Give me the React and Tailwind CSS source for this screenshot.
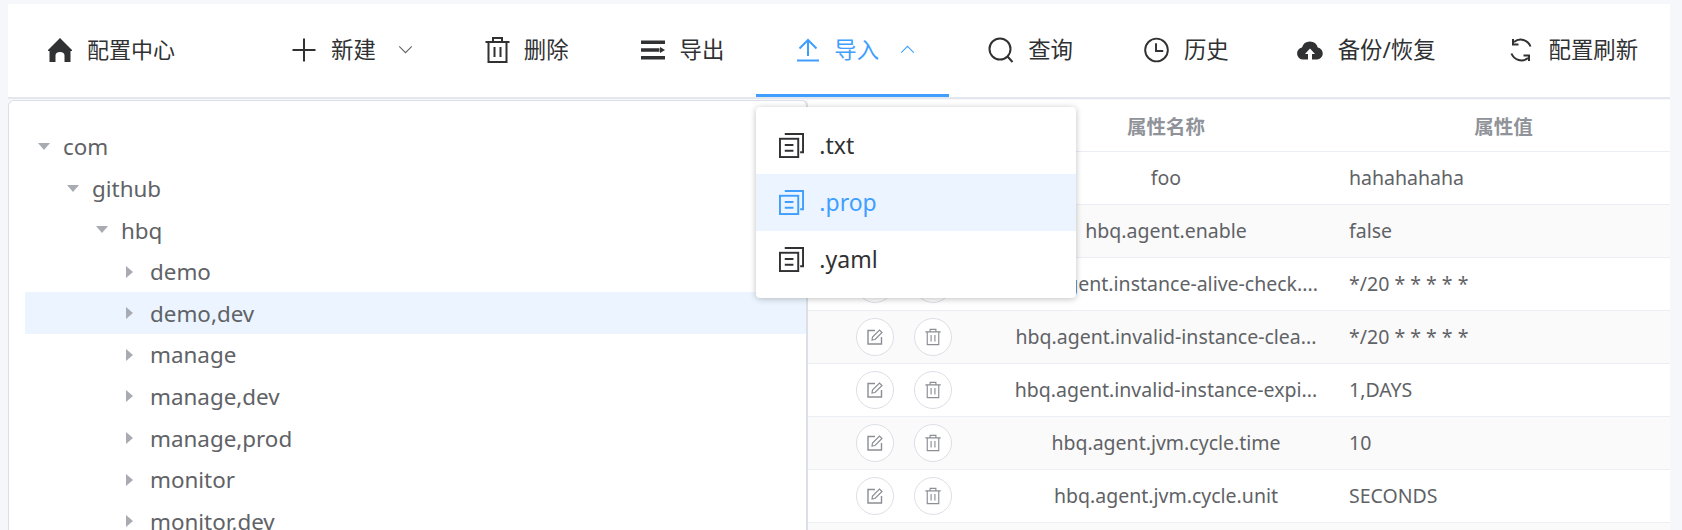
import React from 'react';

const cjk = 'font-["Noto_Sans","Noto_Sans_CJK_SC",sans-serif]';

const HomeIcon = () => (
  <svg viewBox="0 0 24 24" className="w-6 h-6" fill="currentColor">
    <path d="M12 0 L24 12 V13 H22.5 V24 H16.5 V17.5 A4.5 3.5 0 0 0 7.5 17.5 V24 H1.5 V13 H0 V12 Z" />
  </svg>
);

const PlusIcon = () => (
  <svg viewBox="0 0 24 24" className="w-6 h-6" fill="none" stroke="currentColor" strokeWidth="2">
    <path d="M12 0.5 V23.5 M0.5 12 H23.5" />
  </svg>
);

const TrashIcon = ({ className = 'w-[25px] h-[26px]', width = 2 }) => (
  <svg viewBox="0 0 25 26" className={className} fill="none" stroke="currentColor" strokeWidth={width}>
    <path d="M0.5 5 H24.5 M8 5 V1 H17 V5 M3.5 5 V25 H21.5 V5 M9.5 10 V20 M15.5 10 V20" />
  </svg>
);

const ExportIcon = () => (
  <svg viewBox="0 0 24 24" className="w-6 h-6" fill="currentColor">
    <path d="M0 2.5 H24 V6 H0 Z M0 10.2 H18.5 V13.8 H0 Z M0 18 H24 V21.5 H0 Z M19 9 L24 12 L19 15 Z" />
  </svg>
);

const UploadIcon = () => (
  <svg viewBox="0 0 24 24" className="w-6 h-6" fill="none" stroke="currentColor" strokeWidth="2">
    <path d="M12 18 V2 M3.5 10.5 L12 2 L20.5 10.5 M1 22.5 H23" />
  </svg>
);

const SearchIcon = () => (
  <svg viewBox="0 0 26 26" className="w-[26px] h-[26px]" fill="none" stroke="currentColor" strokeWidth="2">
    <circle cx="12" cy="12" r="10.5" />
    <path d="M19.5 19.5 L24.5 25" />
  </svg>
);

const ClockIcon = () => (
  <svg viewBox="0 0 26 26" className="w-[25px] h-[26px]" fill="none" stroke="currentColor" strokeWidth="2">
    <circle cx="13" cy="13" r="11.8" />
    <path d="M12.5 6 V14 H20" />
  </svg>
);

const CloudIcon = () => (
  <svg viewBox="0 0 26 20" className="w-[26px] h-[20px]" fill="currentColor">
    <path d="M6 19.5 A6 6 0 0 1 5 7.6 A8.2 8.2 0 0 1 20.8 7.6 A6 6 0 0 1 20 19.5 L15 19.5 L15 14 L18 14 L13 8.5 L8 14 L11 14 L11 19.5 Z" />
  </svg>
);

const RefreshIcon = () => (
  <svg viewBox="0 0 24 24" className="w-6 h-6" fill="none" stroke="currentColor" strokeWidth="2">
    <path d="M21.5 8.5 A10.5 10.5 0 0 0 5 4" />
    <path d="M2.5 15.5 A10.5 10.5 0 0 0 19 20" />
    <path d="M4 1 V6.5 H9.5" />
    <path d="M20 23 V17.5 H14.5" />
  </svg>
);

const ChevronDown = () => (
  <svg viewBox="0 0 16 10" className="w-[15px] h-[9px]" fill="none" stroke="currentColor" strokeWidth="1.2">
    <path d="M1 1.5 L8 8.5 L15 1.5" />
  </svg>
);

const ChevronUp = () => (
  <svg viewBox="0 0 16 10" className="w-[15px] h-[9px]" fill="none" stroke="currentColor" strokeWidth="1.2">
    <path d="M1 8.5 L8 1.5 L15 8.5" />
  </svg>
);

const DocIcon = () => (
  <svg viewBox="0 0 26 26" className="w-[25px] h-[25px]" fill="none" stroke="currentColor" strokeWidth="2">
    <rect x="1" y="6" width="19" height="19" />
    <path d="M6 1 H25 V20 H22" />
    <path d="M6 12.5 H15 M6 18.5 H15" />
  </svg>
);

const EditIcon = () => (
  <svg viewBox="0 0 16 16" className="w-4 h-4" fill="none" stroke="currentColor" strokeWidth="1.4">
    <path d="M8 1.5 H1 V15 H14.5 V8" />
    <path d="M5 11 L5.5 8 L12.5 1 L15 3.5 L8 10.5 Z" strokeWidth="1.2" />
  </svg>
);

const NavItem = ({ icon, label, after, active, pl = 'pl-[40px]', pr = 'pr-[31px]', gap = 'gap-[15px]', children }) => (
  <div
    className={`relative flex items-center h-full shrink-0 ${gap} ${pl} ${pr} ${
      active ? 'text-[#409eff] border-b-[3px] border-[#409eff] pt-[1px]' : 'text-[#303133] pb-[2px]'
    }`}
  >
    {icon}
    <span className="text-[22.4px] whitespace-nowrap">{label}</span>
    {after && <span className="ml-[7px] flex items-center text-[#606266]">{after}</span>}
    {children}
  </div>
);

const treeRows = [
  { label: 'com', open: true, depth: 0 },
  { label: 'github', open: true, depth: 1 },
  { label: 'hbq', open: true, depth: 2 },
  { label: 'demo', depth: 3 },
  { label: 'demo,dev', depth: 3, selected: true },
  { label: 'manage', depth: 3 },
  { label: 'manage,dev', depth: 3 },
  { label: 'manage,prod', depth: 3 },
  { label: 'monitor', depth: 3 },
  { label: 'monitor,dev', depth: 3 },
];

const tableRows = [
  ['foo', 'hahahahaha'],
  ['hbq.agent.enable', 'false'],
  ['hbq.agent.instance-alive-check....', '*/20 * * * * *'],
  ['hbq.agent.invalid-instance-clea...', '*/20 * * * * *'],
  ['hbq.agent.invalid-instance-expi...', '1,DAYS'],
  ['hbq.agent.jvm.cycle.time', '10'],
  ['hbq.agent.jvm.cycle.unit', 'SECONDS'],
  ['', ''],
];

const TreeRow = ({ row }) => (
  <div
    className={`flex items-center h-[41.6px] shrink-0 text-[22.4px] text-[#606266] ${row.selected ? 'bg-[#ecf5ff]' : ''}`}
    style={{ paddingLeft: row.depth * 29 + 13 }}
  >
    <span className="w-[26px] flex items-center">
      {row.open ? (
        <span className="w-0 h-0 border-l-[6px] border-r-[6px] border-t-[7px] border-l-transparent border-r-transparent border-t-[#a8abb2]" />
      ) : (
        <span className="ml-[1px] w-0 h-0 border-t-[6px] border-b-[6px] border-l-[7px] border-t-transparent border-b-transparent border-l-[#a8abb2]" />
      )}
    </span>
    <span className="-ml-[1px] pt-[1px]">{row.label}</span>
  </div>
);

const RoundBtn = ({ children }) => (
  <button className="w-[38px] h-[38px] rounded-full border border-[#dcdfe6] bg-white flex items-center justify-center text-[#8c8e94]">
    {children}
  </button>
);

const TableRow = ({ row, idx }) => (
  <div className={`flex items-center h-[53px] shrink-0 border-b border-[#ebeef5] ${idx % 2 ? 'bg-[#fafafa]' : 'bg-white'}`}>
    <div className="w-[187px] shrink-0 pl-[48px] flex gap-[20px]">
      {row[0] && (
        <>
          <RoundBtn><EditIcon /></RoundBtn>
          <RoundBtn><TrashIcon className="w-4 h-[18px]" width={1.8} /></RoundBtn>
        </>
      )}
    </div>
    <div className="w-[342px] shrink-0 px-[18px] text-center whitespace-nowrap">{row[0]}</div>
    <div className="flex-1 pl-[12px]">{row[1]}</div>
  </div>
);

export default function App() {
  return (
    <div className={`h-[530px] overflow-hidden bg-[#f5f7fa] pt-[4px] pl-[8px] pr-[12px] ${cjk}`}>
      {/* top menu */}
      <div className="flex h-[93px] bg-white">
        <div className="flex items-center h-full pb-[2px] pl-[40px] gap-[15px] w-[243px] shrink-0 text-[#303133]">
          <HomeIcon />
          <span className="text-[22px]">配置中心</span>
        </div>
        <NavItem icon={<PlusIcon />} label="新建" after={<ChevronDown />} pl="pl-[41px]" pr="pr-[33px]" />
        <NavItem icon={<TrashIcon />} label="删除" pl="pl-[39px]" pr="pr-[32px]" gap="gap-[14px]" />
        <NavItem icon={<ExportIcon />} label="导出" pr="pr-[32px]" />
        <NavItem
          active
          icon={<UploadIcon />}
          label="导入"
          after={<span className="text-[#409eff]"><ChevronUp /></span>}
          pl="pl-[40px]"
          pr="pr-[34px]"
          gap="gap-[14px]"
        >
          <div className="absolute z-10 left-0 top-[103px] w-[320px] py-[10px] bg-white rounded shadow-[0_1px_6px_rgba(0,0,0,0.25)]">
            {['.txt', '.prop', '.yaml'].map((ext) => (
              <div
                key={ext}
                className={`flex items-center h-[57px] pl-[23px] gap-[15px] text-[23px] ${
                  ext === '.prop' ? 'bg-[#ecf5ff] text-[#409eff]' : 'text-[#303133]'
                }`}
              >
                <DocIcon />
                <span>{ext}</span>
              </div>
            ))}
          </div>
        </NavItem>
        <NavItem icon={<SearchIcon />} label="查询" pl="pl-[39px]" gap="gap-[14px]" />
        <NavItem icon={<ClockIcon />} label="历史" />
        <NavItem icon={<CloudIcon />} label="备份/恢复" pl="pl-[37px]" pr="pr-[30px]" />
        <NavItem icon={<RefreshIcon />} label="配置刷新" pl="pl-[43px]" pr="pr-0" gap="gap-[16px]" />
      </div>
      <div className="h-[2px] bg-[#e4e7ed]" />

      {/* body */}
      <div className="flex mt-[1px] h-[430px]">
        <div className="w-[800px] shrink-0 bg-white border-l border-t border-r-2 border-[#dcdfe6] rounded-t-[6px] pl-[16px] pt-[25px]">
          {treeRows.map((row) => (
            <TreeRow key={row.label} row={row} />
          ))}
        </div>
        <div className="flex-1 bg-white text-[19.5px] text-[#606266]">
          <div className="flex items-center h-[52px] pt-[2px] border-b border-[#ebeef5] font-bold text-[#909399]">
            <div className="w-[187px] shrink-0" />
            <div className="w-[342px] shrink-0 text-center">属性名称</div>
            <div className="flex-1 text-center">属性值</div>
          </div>
          {tableRows.map((row, idx) => (
            <TableRow key={idx} row={row} idx={idx} />
          ))}
        </div>
      </div>
    </div>
  );
}
